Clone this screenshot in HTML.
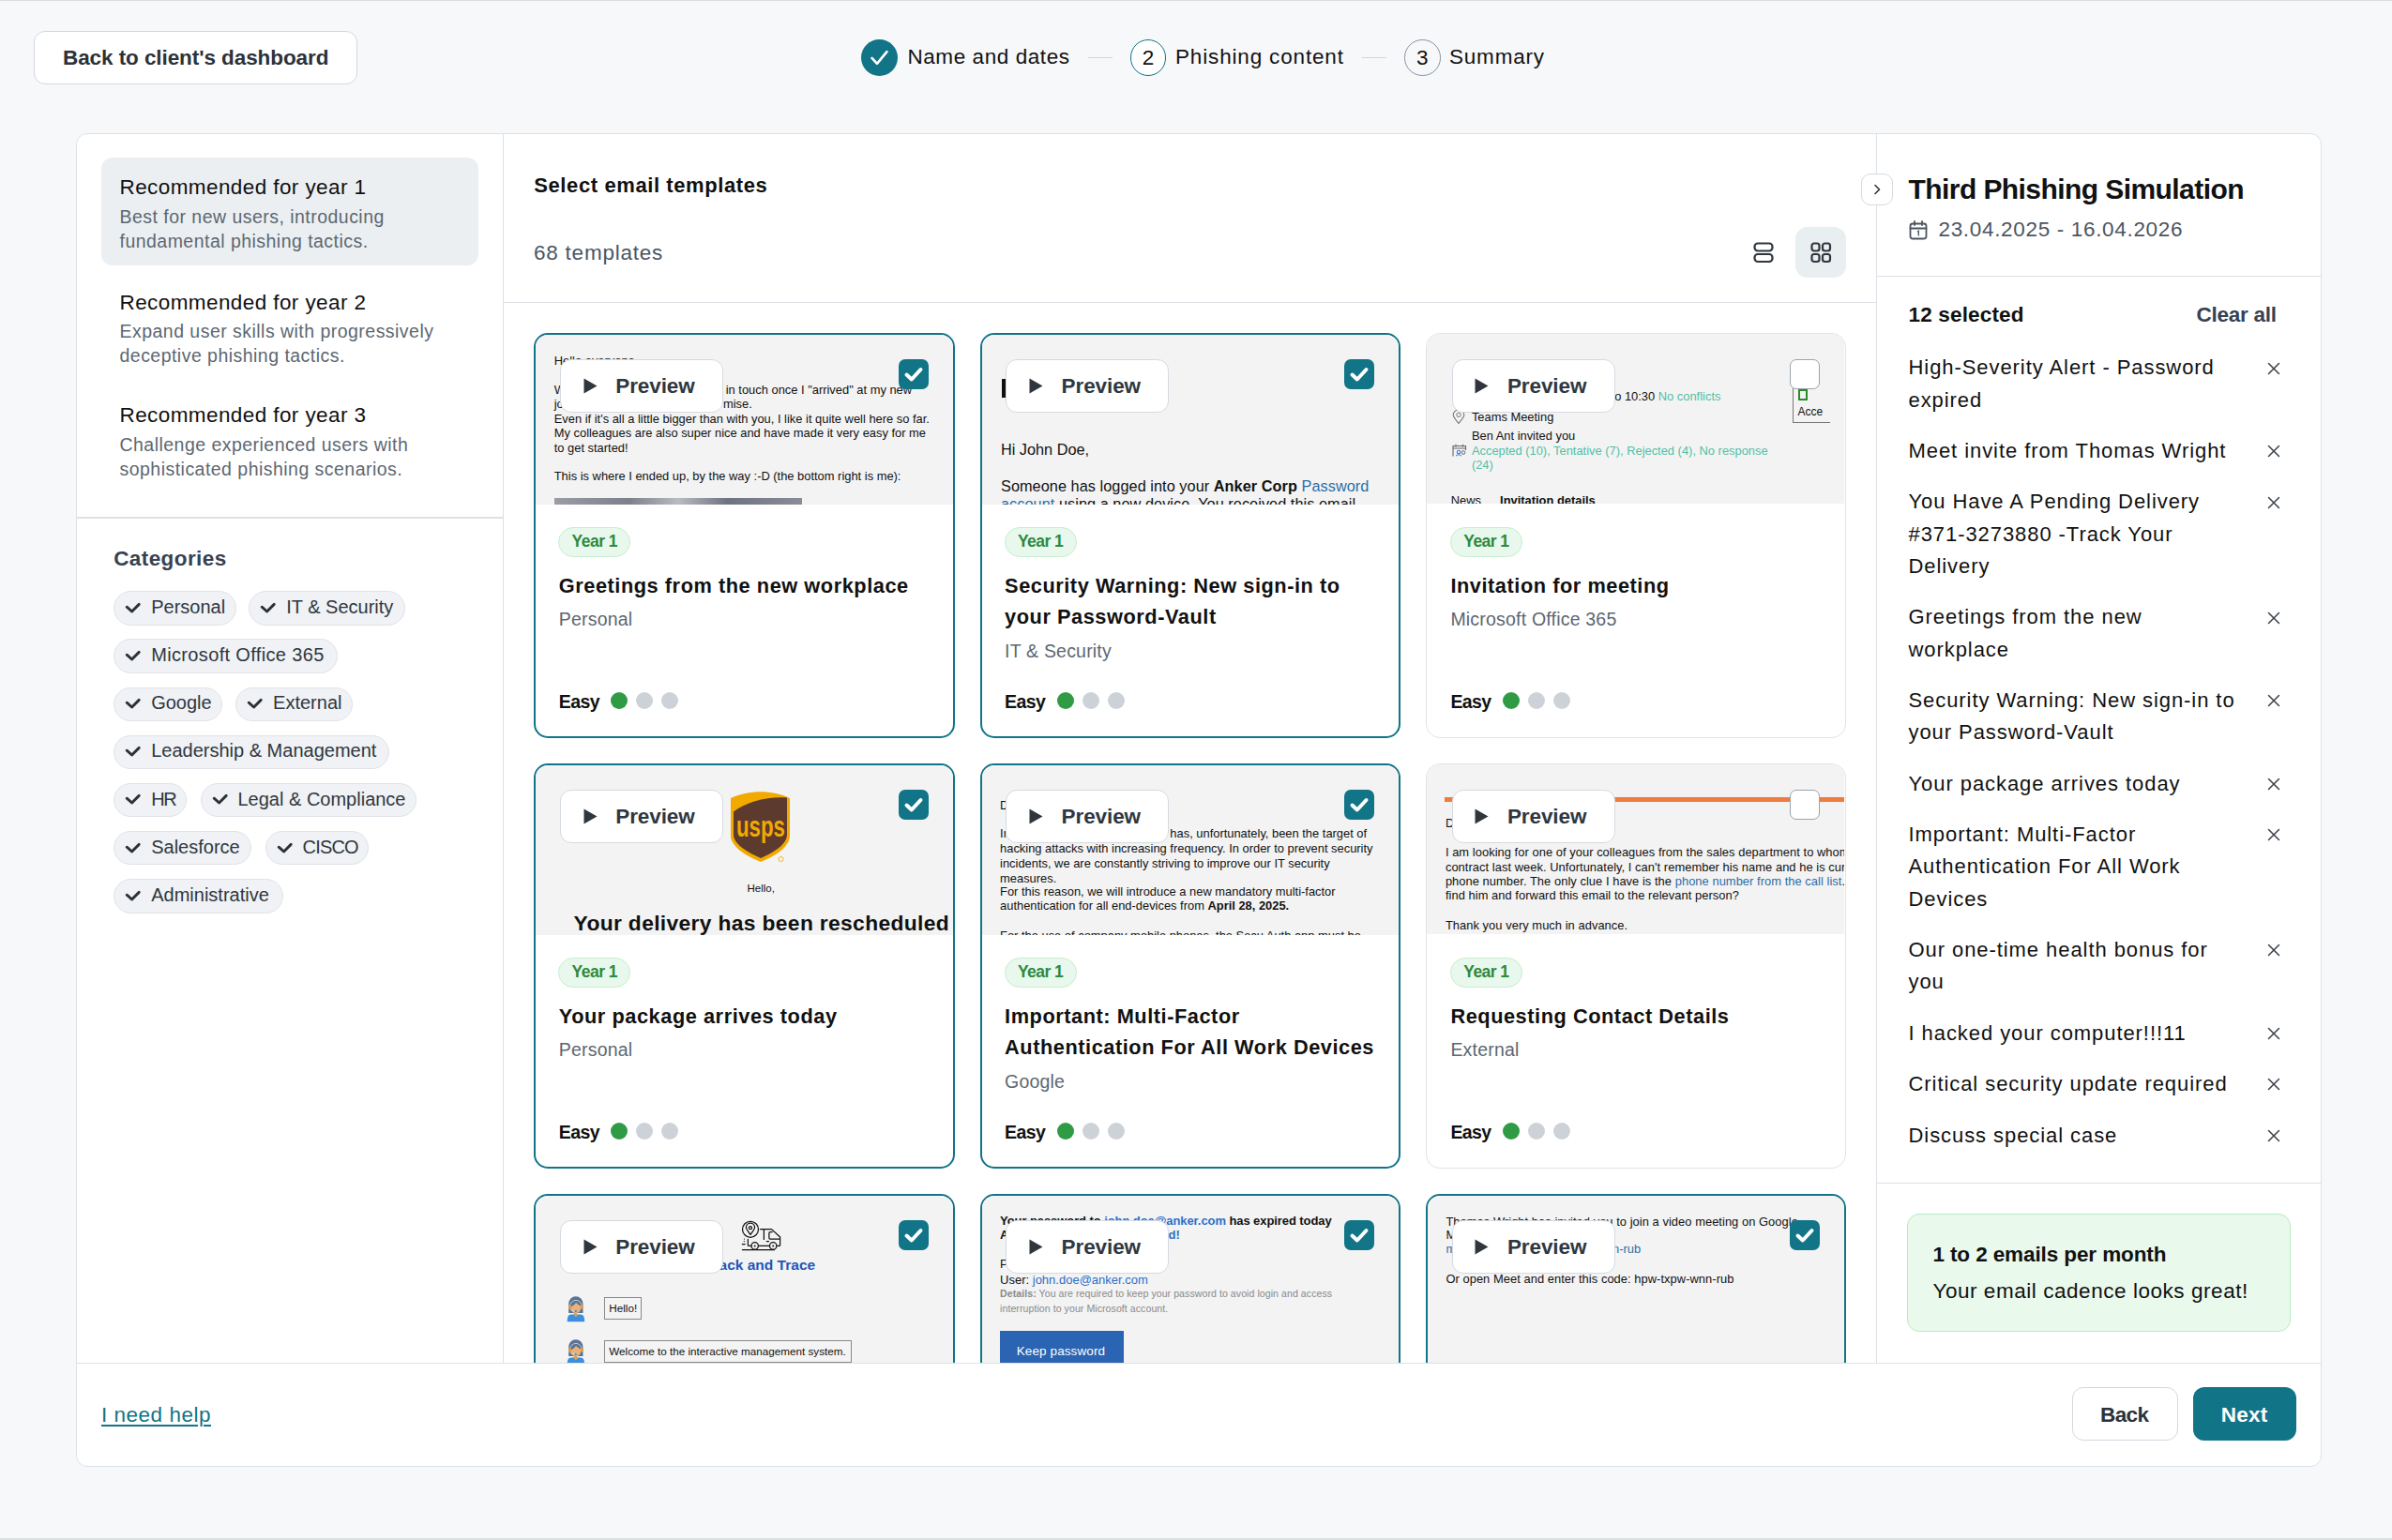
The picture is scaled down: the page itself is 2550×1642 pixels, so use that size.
<!DOCTYPE html>
<html><head><meta charset="utf-8"><title>Phishing content</title>
<style>
*{box-sizing:border-box;margin:0;padding:0}
html,body{width:2550px;height:1642px;overflow:hidden}
body{background:#f7f8fa;font-family:"Liberation Sans",sans-serif;position:relative;color:#111}
.a{position:absolute}
.t{position:absolute;white-space:nowrap}
.clip{position:absolute;overflow:hidden}
</style></head>
<body>
<div class="a" style="left:0.00px;top:0.00px;width:2550.00px;height:1.00px;background:#d9dde2"></div>
<div class="a" style="left:0.00px;top:1640.00px;width:2550.00px;height:2.00px;background:#dcdfe3"></div>
<div class="a" style="left:36.00px;top:33.00px;width:345.00px;height:57.00px;background:#fff;border:1.5px solid #d3d8de;border-radius:12px"></div>
<div class="t" style="left:67.00px;top:48.14px;font-size:22.5px;line-height:28.12px;font-weight:700;color:#2b3239;letter-spacing:-0.08px;">Back to client's dashboard</div>
<div class="a" style="left:918.00px;top:42.00px;width:39.00px;height:39.00px;background:#117487;border-radius:50%"></div>
<svg class="a" style="left:927px;top:51px" width="21" height="21" viewBox="0 0 21 21"><path d="M2.52 10.92 L7.98 16.80 L18.48 4.20" fill="none" stroke="#fff" stroke-width="2.6" stroke-linecap="round" stroke-linejoin="round"/></svg>
<div class="t" style="left:967.40px;top:47.14px;font-size:22.5px;line-height:28.12px;color:#111;letter-spacing:0.58px;">Name and dates</div>
<div class="a" style="left:1160.00px;top:60.75px;width:26.00px;height:1.50px;background:#cfd5db"></div>
<div class="a" style="left:1204.80px;top:42.00px;width:38.50px;height:38.50px;background:#fff;border:1.5px solid #117487;border-radius:50%"></div>
<div class="t" style="left:1204.80px;top:47.64px;font-size:22.5px;line-height:28.12px;color:#111;width:38.5px;text-align:center">2</div>
<div class="t" style="left:1253.00px;top:47.14px;font-size:22.5px;line-height:28.12px;color:#111;letter-spacing:0.84px;">Phishing content</div>
<div class="a" style="left:1452.00px;top:60.75px;width:26.00px;height:1.50px;background:#cfd5db"></div>
<div class="a" style="left:1497.00px;top:42.00px;width:38.50px;height:38.50px;border:1.5px solid #8a939c;border-radius:50%"></div>
<div class="t" style="left:1497.00px;top:47.64px;font-size:22.5px;line-height:28.12px;color:#111;width:38.5px;text-align:center">3</div>
<div class="t" style="left:1545.00px;top:47.14px;font-size:22.5px;line-height:28.12px;color:#111;letter-spacing:0.79px;">Summary</div>
<div class="a" style="left:81.00px;top:142.00px;width:2394.00px;height:1422.00px;background:#fff;border:1.5px solid #dde1e6;border-radius:12px"></div>
<div class="a" style="left:535.50px;top:142.50px;width:1.50px;height:1311.00px;background:#dde1e6"></div>
<div class="a" style="left:1999.75px;top:142.50px;width:1.50px;height:1311.00px;background:#dde1e6"></div>
<div class="a" style="left:82.00px;top:1452.75px;width:2392.00px;height:1.50px;background:#dde1e6"></div>
<div class="a" style="left:108.00px;top:168.00px;width:402.00px;height:114.50px;background:#ebeff2;border-radius:12px"></div>
<div class="t" style="left:127.50px;top:186.39px;font-size:22.5px;line-height:28.12px;color:#111;letter-spacing:0.41px;">Recommended for year 1</div>
<div class="t" style="left:127.50px;top:217.62px;font-size:19.5px;line-height:26.25px;color:#5d6771;letter-spacing:0.47px;">Best for new users, introducing<br>fundamental phishing tactics.</div>
<div class="t" style="left:127.50px;top:308.89px;font-size:22.5px;line-height:28.12px;color:#111;letter-spacing:0.41px;">Recommended for year 2</div>
<div class="t" style="left:127.50px;top:340.12px;font-size:19.5px;line-height:26.25px;color:#5d6771;letter-spacing:0.47px;">Expand user skills with progressively<br>deceptive phishing tactics.</div>
<div class="t" style="left:127.50px;top:429.39px;font-size:22.5px;line-height:28.12px;color:#111;letter-spacing:0.41px;">Recommended for year 3</div>
<div class="t" style="left:127.50px;top:460.62px;font-size:19.5px;line-height:26.25px;color:#5d6771;letter-spacing:0.47px;">Challenge experienced users with<br>sophisticated phishing scenarios.</div>
<div class="a" style="left:82.00px;top:551.25px;width:454.00px;height:1.50px;background:#dde1e6"></div>
<div class="t" style="left:121.20px;top:582.34px;font-size:22.5px;line-height:28.12px;font-weight:700;color:#374151;letter-spacing:0.41px;">Categories</div>
<div class="a" style="left:121.20px;top:630.20px;width:130.50px;height:36.40px;background:#f0f2f5;border:1.5px solid #dfe3e8;border-radius:19px"></div>
<svg class="a" style="left:133.2px;top:639.7px" width="18" height="18" viewBox="0 0 18 18"><path d="M2.2 7.2 L7.6 12 L15.2 4.4" fill="none" stroke="#2b3239" stroke-width="2.9" stroke-linecap="round" stroke-linejoin="round"/></svg>
<div class="t" style="left:161.20px;top:634.97px;font-size:20px;line-height:25.0px;color:#2f3740;">Personal</div>
<div class="a" style="left:265.20px;top:630.20px;width:166.40px;height:36.40px;background:#f0f2f5;border:1.5px solid #dfe3e8;border-radius:19px"></div>
<svg class="a" style="left:277.2px;top:639.7px" width="18" height="18" viewBox="0 0 18 18"><path d="M2.2 7.2 L7.6 12 L15.2 4.4" fill="none" stroke="#2b3239" stroke-width="2.9" stroke-linecap="round" stroke-linejoin="round"/></svg>
<div class="t" style="left:305.20px;top:634.97px;font-size:20px;line-height:25.0px;color:#2f3740;">IT &amp; Security</div>
<div class="a" style="left:121.20px;top:681.37px;width:239.00px;height:36.40px;background:#f0f2f5;border:1.5px solid #dfe3e8;border-radius:19px"></div>
<svg class="a" style="left:133.2px;top:690.87px" width="18" height="18" viewBox="0 0 18 18"><path d="M2.2 7.2 L7.6 12 L15.2 4.4" fill="none" stroke="#2b3239" stroke-width="2.9" stroke-linecap="round" stroke-linejoin="round"/></svg>
<div class="t" style="left:161.20px;top:686.14px;font-size:20px;line-height:25.0px;color:#2f3740;letter-spacing:0.35px;">Microsoft Office 365</div>
<div class="a" style="left:121.20px;top:732.54px;width:116.20px;height:36.40px;background:#f0f2f5;border:1.5px solid #dfe3e8;border-radius:19px"></div>
<svg class="a" style="left:133.2px;top:742.0400000000001px" width="18" height="18" viewBox="0 0 18 18"><path d="M2.2 7.2 L7.6 12 L15.2 4.4" fill="none" stroke="#2b3239" stroke-width="2.9" stroke-linecap="round" stroke-linejoin="round"/></svg>
<div class="t" style="left:161.20px;top:737.31px;font-size:20px;line-height:25.0px;color:#2f3740;">Google</div>
<div class="a" style="left:251.10px;top:732.54px;width:125.20px;height:36.40px;background:#f0f2f5;border:1.5px solid #dfe3e8;border-radius:19px"></div>
<svg class="a" style="left:263.1px;top:742.0400000000001px" width="18" height="18" viewBox="0 0 18 18"><path d="M2.2 7.2 L7.6 12 L15.2 4.4" fill="none" stroke="#2b3239" stroke-width="2.9" stroke-linecap="round" stroke-linejoin="round"/></svg>
<div class="t" style="left:291.10px;top:737.31px;font-size:20px;line-height:25.0px;color:#2f3740;">External</div>
<div class="a" style="left:121.20px;top:783.71px;width:294.20px;height:36.40px;background:#f0f2f5;border:1.5px solid #dfe3e8;border-radius:19px"></div>
<svg class="a" style="left:133.2px;top:793.21px" width="18" height="18" viewBox="0 0 18 18"><path d="M2.2 7.2 L7.6 12 L15.2 4.4" fill="none" stroke="#2b3239" stroke-width="2.9" stroke-linecap="round" stroke-linejoin="round"/></svg>
<div class="t" style="left:161.20px;top:788.48px;font-size:20px;line-height:25.0px;color:#2f3740;">Leadership &amp; Management</div>
<div class="a" style="left:121.20px;top:834.88px;width:78.30px;height:36.40px;background:#f0f2f5;border:1.5px solid #dfe3e8;border-radius:19px"></div>
<svg class="a" style="left:133.2px;top:844.3800000000001px" width="18" height="18" viewBox="0 0 18 18"><path d="M2.2 7.2 L7.6 12 L15.2 4.4" fill="none" stroke="#2b3239" stroke-width="2.9" stroke-linecap="round" stroke-linejoin="round"/></svg>
<div class="t" style="left:161.20px;top:839.65px;font-size:20px;line-height:25.0px;color:#2f3740;letter-spacing:-1.5px;">HR</div>
<div class="a" style="left:213.50px;top:834.88px;width:230.00px;height:36.40px;background:#f0f2f5;border:1.5px solid #dfe3e8;border-radius:19px"></div>
<svg class="a" style="left:225.5px;top:844.3800000000001px" width="18" height="18" viewBox="0 0 18 18"><path d="M2.2 7.2 L7.6 12 L15.2 4.4" fill="none" stroke="#2b3239" stroke-width="2.9" stroke-linecap="round" stroke-linejoin="round"/></svg>
<div class="t" style="left:253.50px;top:839.65px;font-size:20px;line-height:25.0px;color:#2f3740;">Legal &amp; Compliance</div>
<div class="a" style="left:121.20px;top:886.05px;width:147.30px;height:36.40px;background:#f0f2f5;border:1.5px solid #dfe3e8;border-radius:19px"></div>
<svg class="a" style="left:133.2px;top:895.5500000000001px" width="18" height="18" viewBox="0 0 18 18"><path d="M2.2 7.2 L7.6 12 L15.2 4.4" fill="none" stroke="#2b3239" stroke-width="2.9" stroke-linecap="round" stroke-linejoin="round"/></svg>
<div class="t" style="left:161.20px;top:890.82px;font-size:20px;line-height:25.0px;color:#2f3740;">Salesforce</div>
<div class="a" style="left:282.50px;top:886.05px;width:110.80px;height:36.40px;background:#f0f2f5;border:1.5px solid #dfe3e8;border-radius:19px"></div>
<svg class="a" style="left:294.5px;top:895.5500000000001px" width="18" height="18" viewBox="0 0 18 18"><path d="M2.2 7.2 L7.6 12 L15.2 4.4" fill="none" stroke="#2b3239" stroke-width="2.9" stroke-linecap="round" stroke-linejoin="round"/></svg>
<div class="t" style="left:322.50px;top:890.82px;font-size:20px;line-height:25.0px;color:#2f3740;letter-spacing:-0.8px;">CISCO</div>
<div class="a" style="left:121.20px;top:937.22px;width:181.30px;height:36.40px;background:#f0f2f5;border:1.5px solid #dfe3e8;border-radius:19px"></div>
<svg class="a" style="left:133.2px;top:946.72px" width="18" height="18" viewBox="0 0 18 18"><path d="M2.2 7.2 L7.6 12 L15.2 4.4" fill="none" stroke="#2b3239" stroke-width="2.9" stroke-linecap="round" stroke-linejoin="round"/></svg>
<div class="t" style="left:161.20px;top:941.99px;font-size:20px;line-height:25.0px;color:#2f3740;">Administrative</div>
<div class="t" style="left:569.25px;top:183.63px;font-size:22px;line-height:27.5px;font-weight:700;color:#111;letter-spacing:0.6px;">Select email templates</div>
<div class="t" style="left:569.00px;top:255.64px;font-size:22.5px;line-height:28.12px;color:#4b5563;letter-spacing:0.77px;">68 templates</div>
<svg class="a" style="left:1866px;top:255px" width="28" height="28" viewBox="0 0 28 28"><rect x="4.5" y="4.5" width="19" height="8" rx="3.5" fill="none" stroke="#2f363d" stroke-width="2.2"/><rect x="4.5" y="16" width="19" height="8" rx="3.5" fill="none" stroke="#2f363d" stroke-width="2.2"/></svg>
<div class="a" style="left:1914.00px;top:242.00px;width:54.00px;height:54.00px;background:#e9eef1;border-radius:13px"></div>
<svg class="a" style="left:1927px;top:255px" width="28" height="28" viewBox="0 0 28 28"><rect x="4.5" y="4.5" width="8" height="8" rx="2.5" fill="none" stroke="#2f363d" stroke-width="2.2"/><rect x="16" y="4.5" width="8" height="8" rx="2.5" fill="none" stroke="#2f363d" stroke-width="2.2"/><rect x="4.5" y="16" width="8" height="8" rx="2.5" fill="none" stroke="#2f363d" stroke-width="2.2"/><rect x="16" y="16" width="8" height="8" rx="2.5" fill="none" stroke="#2f363d" stroke-width="2.2"/></svg>
<div class="a" style="left:537.00px;top:321.50px;width:1463.00px;height:1.50px;background:#dde1e6"></div>
<div class="clip" style="left:537px;top:323px;width:1463px;height:1129.75px"><div class="a" style="left:-537px;top:-323px;width:2550px;height:1642px">
<div class="a" style="left:569.25px;top:355.3px;width:448.3px;height:432px;background:#fff;border:2px solid #117487;border-radius:15px;overflow:hidden">
<div class="clip" style="left:0;top:0;width:444.3px;height:180.7px;background:#f3f3f3">
<div class="t" style="left:19.50px;top:19.38px;font-size:12.9px;line-height:15.3px;color:#111;">Hello everyone,</div>
<div class="t" style="left:19.50px;top:50.58px;font-size:12.9px;line-height:15.3px;color:#111;">We</div>
<div class="t" style="left:202.50px;top:50.58px;font-size:12.9px;line-height:15.3px;color:#111;">in touch once I "arrived" at my new</div>
<div class="t" style="left:19.50px;top:65.58px;font-size:12.9px;line-height:15.3px;color:#111;">job</div>
<div class="t" style="left:199.75px;top:65.58px;font-size:12.9px;line-height:15.3px;color:#111;">mise.</div>
<div class="t" style="left:19.50px;top:81.78px;font-size:12.9px;line-height:15.3px;color:#111;">Even if it's all a little bigger than with you, I like it quite well here so far.</div>
<div class="t" style="left:19.50px;top:96.78px;font-size:12.9px;line-height:15.3px;color:#111;">My colleagues are also super nice and have made it very easy for me</div>
<div class="t" style="left:19.50px;top:112.28px;font-size:12.9px;line-height:15.3px;color:#111;">to get started!</div>
<div class="t" style="left:19.50px;top:142.28px;font-size:12.9px;line-height:15.3px;color:#111;">This is where I ended up, by the way :-D (the bottom right is me):</div>
<div class="a" style="left:19.50px;top:173.50px;width:264.00px;height:8.00px;background:linear-gradient(90deg,#9a9ca6,#7d7f8a 30%,#b9bbc2 50%,#6f7380 70%,#8a8d98)"></div>
</div>
</div>
<div class="a" style="left:597.00px;top:383.00px;width:174.00px;height:57.00px;background:#fff;border:1.5px solid #d5dae0;border-radius:12px"></div>
<svg class="a" style="left:621.75px;top:403.1px" width="15" height="17" viewBox="0 0 15 17"><path d="M0.5 0.5 L14.5 8.5 L0.5 16.5Z" fill="#2f363d"/></svg>
<div class="t" style="left:656.25px;top:398.14px;font-size:22.5px;line-height:28.12px;font-weight:700;color:#2f3740;letter-spacing:-0.09px;">Preview</div>
<div class="a" style="left:957.50px;top:382.50px;width:32.00px;height:32.00px;background:#117487;border-radius:7px"></div>
<svg class="a" style="left:957.5px;top:382.5px" width="32" height="32" viewBox="0 0 32 32"><path d="M8.5 16.5 L13.8 21.5 L23.5 11" fill="none" stroke="#fff" stroke-width="4" stroke-linecap="round" stroke-linejoin="round"/></svg>
<div class="a" style="left:595.25px;top:562.00px;width:77.00px;height:31.50px;background:#e8f8ec;border:1.5px solid #c8eecf;border-radius:16px"></div>
<div class="t" style="left:595.25px;top:567.40px;font-size:17.5px;line-height:21.88px;font-weight:700;color:#2d8a3e;letter-spacing:-0.55px;width:77px;text-align:center">Year 1</div>
<div class="t" style="left:595.75px;top:607.71px;font-size:21.75px;line-height:33.5px;font-weight:700;color:#111;letter-spacing:0.55px;">Greetings from the new workplace</div>
<div class="t" style="left:595.75px;top:648.05px;font-size:19.5px;line-height:24.38px;color:#5d6771;letter-spacing:0.2px;">Personal</div>
<div class="t" style="left:595.75px;top:736.35px;font-size:19.5px;line-height:24.38px;font-weight:700;color:#111;letter-spacing:-0.6px;">Easy</div>
<div class="a" style="left:651.45px;top:738.30px;width:18.00px;height:18.00px;background:#2f9b45;border-radius:50%"></div>
<div class="a" style="left:678.45px;top:738.30px;width:18.00px;height:18.00px;background:#cdd2d8;border-radius:50%"></div>
<div class="a" style="left:705.45px;top:738.30px;width:18.00px;height:18.00px;background:#cdd2d8;border-radius:50%"></div>
<div class="a" style="left:1044.58px;top:355.3px;width:448.3px;height:432px;background:#fff;border:2px solid #117487;border-radius:15px;overflow:hidden">
<div class="clip" style="left:0;top:0;width:444.3px;height:180.7px;background:#f3f3f3">
<div class="a" style="left:21.80px;top:46.50px;width:3.40px;height:20.20px;background:#111"></div>
<div class="t" style="left:20.40px;top:113.15px;font-size:16.3px;line-height:19px;color:#111;">Hi John Doe,</div>
<div class="t" style="left:20.40px;top:152.15px;font-size:16.3px;line-height:19px;color:#111;letter-spacing:0.05px;">Someone has logged into your <b>Anker Corp</b> <span style="color:#2c6ea6">Password</span></div>
<div class="t" style="left:20.40px;top:171.15px;font-size:16.3px;line-height:19px;color:#111;letter-spacing:0.05px;"><span style="color:#2c6ea6">account</span> using a new device. You received this email</div>
</div>
</div>
<div class="a" style="left:1072.33px;top:383.00px;width:174.00px;height:57.00px;background:#fff;border:1.5px solid #d5dae0;border-radius:12px"></div>
<svg class="a" style="left:1097.08px;top:403.1px" width="15" height="17" viewBox="0 0 15 17"><path d="M0.5 0.5 L14.5 8.5 L0.5 16.5Z" fill="#2f363d"/></svg>
<div class="t" style="left:1131.58px;top:398.14px;font-size:22.5px;line-height:28.12px;font-weight:700;color:#2f3740;letter-spacing:-0.09px;">Preview</div>
<div class="a" style="left:1432.83px;top:382.50px;width:32.00px;height:32.00px;background:#117487;border-radius:7px"></div>
<svg class="a" style="left:1432.83px;top:382.5px" width="32" height="32" viewBox="0 0 32 32"><path d="M8.5 16.5 L13.8 21.5 L23.5 11" fill="none" stroke="#fff" stroke-width="4" stroke-linecap="round" stroke-linejoin="round"/></svg>
<div class="a" style="left:1070.58px;top:562.00px;width:77.00px;height:31.50px;background:#e8f8ec;border:1.5px solid #c8eecf;border-radius:16px"></div>
<div class="t" style="left:1070.58px;top:567.40px;font-size:17.5px;line-height:21.88px;font-weight:700;color:#2d8a3e;letter-spacing:-0.55px;width:77px;text-align:center">Year 1</div>
<div class="t" style="left:1071.08px;top:607.71px;font-size:21.75px;line-height:33.5px;font-weight:700;color:#111;letter-spacing:0.55px;">Security Warning: New sign-in to<br>your Password-Vault</div>
<div class="t" style="left:1071.08px;top:681.55px;font-size:19.5px;line-height:24.38px;color:#5d6771;letter-spacing:0.2px;">IT &amp; Security</div>
<div class="t" style="left:1071.08px;top:736.35px;font-size:19.5px;line-height:24.38px;font-weight:700;color:#111;letter-spacing:-0.6px;">Easy</div>
<div class="a" style="left:1126.78px;top:738.30px;width:18.00px;height:18.00px;background:#2f9b45;border-radius:50%"></div>
<div class="a" style="left:1153.78px;top:738.30px;width:18.00px;height:18.00px;background:#cdd2d8;border-radius:50%"></div>
<div class="a" style="left:1180.78px;top:738.30px;width:18.00px;height:18.00px;background:#cdd2d8;border-radius:50%"></div>
<div class="a" style="left:1519.9px;top:355.3px;width:448.3px;height:432px;background:#fff;border:1.5px solid #dfe3e8;border-radius:15px;overflow:hidden">
<div class="clip" style="left:0;top:0;width:445.3px;height:181.2px;background:#f3f3f3">
<div class="t" style="left:48.00px;top:58.98px;font-size:12.9px;line-height:15.3px;color:#111;">Monday</div>
<div class="t" style="left:200.30px;top:58.98px;font-size:12.9px;line-height:15.3px;color:#111;">o 10:30 <span style="color:#52bfa5">No conflicts</span></div>
<div class="t" style="left:48.00px;top:81.08px;font-size:12.9px;line-height:15.3px;color:#111;">Teams Meeting</div>
<div class="t" style="left:48.00px;top:100.68px;font-size:12.9px;line-height:15.3px;color:#111;">Ben Ant invited you</div>
<div class="t" style="left:48.00px;top:116.63px;font-size:12.9px;line-height:15.4px;color:#111;"><span style="color:#52bfa5">Accepted (10), Tentative (7), Rejected (4), No response<br>(24)</span></div>
<svg class="a" style="left:27.0px;top:81.0px" width="14" height="15" viewBox="0 0 14 15"><path d="M7 14.5 C3.5 10 1.2 7.5 1.2 5.5 A5.8 5.5 0 0 1 12.8 5.5 C12.8 7.5 10.5 10 7 14.5Z" fill="none" stroke="#777" stroke-width="1.1"/><circle cx="7" cy="5.3" r="2.2" fill="none" stroke="#777" stroke-width="1"/></svg>
<svg class="a" style="left:27.0px;top:117.0px" width="16" height="14" viewBox="0 0 16 14"><path d="M1 13.5 V2.5 H14.5 V7 M1 5 H14.5 M4 0.8 V3.5 M11.5 0.8 V3.5" fill="none" stroke="#666" stroke-width="1.1"/><circle cx="7" cy="9" r="1.7" fill="none" stroke="#3a7bd5" stroke-width="1.1"/><path d="M4.3 13.2 C5 11.3 9 11.3 9.7 13.2" fill="none" stroke="#3a7bd5" stroke-width="1.1"/><circle cx="12" cy="9.5" r="1.8" fill="none" stroke="#666" stroke-width="1"/></svg>
<div class="t" style="left:25.90px;top:169.58px;font-size:12.9px;line-height:15.3px;color:#111;">News</div>
<div class="t" style="left:78.20px;top:169.58px;font-size:12.9px;line-height:15.3px;font-weight:700;color:#111;">Invitation details</div>
<div class="a" style="left:390.10px;top:57.60px;width:40.00px;height:37.10px;border-left:1.5px solid #777;border-bottom:1.5px solid #777"></div>
<div class="a" style="left:395.90px;top:58.60px;width:10.20px;height:12.00px;border:2px solid #2a8a2a"></div>
<div class="t" style="left:395.50px;top:75.59px;font-size:12px;line-height:15.3px;color:#111;">Acce</div>
</div>
</div>
<div class="a" style="left:1547.65px;top:383.00px;width:174.00px;height:57.00px;background:#fff;border:1.5px solid #d5dae0;border-radius:12px"></div>
<svg class="a" style="left:1572.4px;top:403.1px" width="15" height="17" viewBox="0 0 15 17"><path d="M0.5 0.5 L14.5 8.5 L0.5 16.5Z" fill="#2f363d"/></svg>
<div class="t" style="left:1606.90px;top:398.14px;font-size:22.5px;line-height:28.12px;font-weight:700;color:#2f3740;letter-spacing:-0.09px;">Preview</div>
<div class="a" style="left:1908.15px;top:382.50px;width:32.00px;height:32.00px;background:#fff;border:1.5px solid #9aa3ab;border-radius:7px"></div>
<div class="a" style="left:1545.90px;top:562.00px;width:77.00px;height:31.50px;background:#e8f8ec;border:1.5px solid #c8eecf;border-radius:16px"></div>
<div class="t" style="left:1545.90px;top:567.40px;font-size:17.5px;line-height:21.88px;font-weight:700;color:#2d8a3e;letter-spacing:-0.55px;width:77px;text-align:center">Year 1</div>
<div class="t" style="left:1546.40px;top:607.71px;font-size:21.75px;line-height:33.5px;font-weight:700;color:#111;letter-spacing:0.55px;">Invitation for meeting</div>
<div class="t" style="left:1546.40px;top:648.05px;font-size:19.5px;line-height:24.38px;color:#5d6771;letter-spacing:0.2px;">Microsoft Office 365</div>
<div class="t" style="left:1546.40px;top:736.35px;font-size:19.5px;line-height:24.38px;font-weight:700;color:#111;letter-spacing:-0.6px;">Easy</div>
<div class="a" style="left:1602.10px;top:738.30px;width:18.00px;height:18.00px;background:#2f9b45;border-radius:50%"></div>
<div class="a" style="left:1629.10px;top:738.30px;width:18.00px;height:18.00px;background:#cdd2d8;border-radius:50%"></div>
<div class="a" style="left:1656.10px;top:738.30px;width:18.00px;height:18.00px;background:#cdd2d8;border-radius:50%"></div>
<div class="a" style="left:569.25px;top:814.3px;width:448.3px;height:432px;background:#fff;border:2px solid #117487;border-radius:15px;overflow:hidden">
<div class="clip" style="left:0;top:0;width:444.3px;height:180.7px;background:#f3f3f3">
<svg class="a" style="left:207px;top:26.7px" width="66" height="78" viewBox="0 0 66 78"><path d="M1 8 C20 -1 46 -1 64 8 V48 C64 60 48 70 33 76 C18 70 1 60 1 48 Z" fill="#f2a900"/><path d="M4 22.5 C18 12 40 6 61 7.5 V47 C61 57 47 66 33 72 C19 66 4 57 4 47 Z" fill="#5c3a2e"/><text x="7" y="49" font-family="Liberation Sans" font-weight="700" font-size="32" fill="#f2a900" textLength="52" lengthAdjust="spacingAndGlyphs">usps</text><circle cx="54.5" cy="73" r="2.6" fill="none" stroke="#f2a900" stroke-width="0.8"/></svg>
<div class="t" style="left:220.00px;top:123.97px;font-size:11.5px;line-height:15.3px;color:#111;width:40px;text-align:center">Hello,</div>
<div class="t" style="left:40.30px;top:155.20px;font-size:22.8px;line-height:26px;font-weight:700;color:#111;letter-spacing:0.35px;">Your delivery has been rescheduled</div>
</div>
</div>
<div class="a" style="left:597.00px;top:842.00px;width:174.00px;height:57.00px;background:#fff;border:1.5px solid #d5dae0;border-radius:12px"></div>
<svg class="a" style="left:621.75px;top:862.0999999999999px" width="15" height="17" viewBox="0 0 15 17"><path d="M0.5 0.5 L14.5 8.5 L0.5 16.5Z" fill="#2f363d"/></svg>
<div class="t" style="left:656.25px;top:857.14px;font-size:22.5px;line-height:28.12px;font-weight:700;color:#2f3740;letter-spacing:-0.09px;">Preview</div>
<div class="a" style="left:957.50px;top:841.50px;width:32.00px;height:32.00px;background:#117487;border-radius:7px"></div>
<svg class="a" style="left:957.5px;top:841.5px" width="32" height="32" viewBox="0 0 32 32"><path d="M8.5 16.5 L13.8 21.5 L23.5 11" fill="none" stroke="#fff" stroke-width="4" stroke-linecap="round" stroke-linejoin="round"/></svg>
<div class="a" style="left:595.25px;top:1021.00px;width:77.00px;height:31.50px;background:#e8f8ec;border:1.5px solid #c8eecf;border-radius:16px"></div>
<div class="t" style="left:595.25px;top:1026.40px;font-size:17.5px;line-height:21.88px;font-weight:700;color:#2d8a3e;letter-spacing:-0.55px;width:77px;text-align:center">Year 1</div>
<div class="t" style="left:595.75px;top:1066.71px;font-size:21.75px;line-height:33.5px;font-weight:700;color:#111;letter-spacing:0.55px;">Your package arrives today</div>
<div class="t" style="left:595.75px;top:1107.05px;font-size:19.5px;line-height:24.38px;color:#5d6771;letter-spacing:0.2px;">Personal</div>
<div class="t" style="left:595.75px;top:1195.35px;font-size:19.5px;line-height:24.38px;font-weight:700;color:#111;letter-spacing:-0.6px;">Easy</div>
<div class="a" style="left:651.45px;top:1197.30px;width:18.00px;height:18.00px;background:#2f9b45;border-radius:50%"></div>
<div class="a" style="left:678.45px;top:1197.30px;width:18.00px;height:18.00px;background:#cdd2d8;border-radius:50%"></div>
<div class="a" style="left:705.45px;top:1197.30px;width:18.00px;height:18.00px;background:#cdd2d8;border-radius:50%"></div>
<div class="a" style="left:1044.58px;top:814.3px;width:448.3px;height:432px;background:#fff;border:2px solid #117487;border-radius:15px;overflow:hidden">
<div class="clip" style="left:0;top:0;width:444.3px;height:180.7px;background:#f3f3f3">
<div class="t" style="left:19.50px;top:34.33px;font-size:12.9px;line-height:15.6px;color:#111;">Dear colleagues,</div>
<div class="t" style="left:19.50px;top:65.13px;font-size:12.9px;line-height:15.6px;color:#111;">In recent months, our company has, unfortunately, been the target of</div>
<div class="t" style="left:19.50px;top:80.43px;font-size:12.9px;line-height:15.6px;color:#111;">hacking attacks with increasing frequency. In order to prevent security</div>
<div class="t" style="left:19.50px;top:96.23px;font-size:12.9px;line-height:15.6px;color:#111;">incidents, we are constantly striving to improve our IT security</div>
<div class="t" style="left:19.50px;top:112.23px;font-size:12.9px;line-height:15.6px;color:#111;">measures.</div>
<div class="t" style="left:19.50px;top:127.03px;font-size:12.9px;line-height:15.6px;color:#111;">For this reason, we will introduce a new mandatory multi-factor</div>
<div class="t" style="left:19.50px;top:142.03px;font-size:12.9px;line-height:15.6px;color:#111;">authentication for all end-devices from <b>April 28, 2025.</b></div>
<div class="t" style="left:19.50px;top:173.73px;font-size:12.9px;line-height:15.6px;color:#111;">For the use of company mobile phones, the Secu Auth app must be</div>
</div>
</div>
<div class="a" style="left:1072.33px;top:842.00px;width:174.00px;height:57.00px;background:#fff;border:1.5px solid #d5dae0;border-radius:12px"></div>
<svg class="a" style="left:1097.08px;top:862.0999999999999px" width="15" height="17" viewBox="0 0 15 17"><path d="M0.5 0.5 L14.5 8.5 L0.5 16.5Z" fill="#2f363d"/></svg>
<div class="t" style="left:1131.58px;top:857.14px;font-size:22.5px;line-height:28.12px;font-weight:700;color:#2f3740;letter-spacing:-0.09px;">Preview</div>
<div class="a" style="left:1432.83px;top:841.50px;width:32.00px;height:32.00px;background:#117487;border-radius:7px"></div>
<svg class="a" style="left:1432.83px;top:841.5px" width="32" height="32" viewBox="0 0 32 32"><path d="M8.5 16.5 L13.8 21.5 L23.5 11" fill="none" stroke="#fff" stroke-width="4" stroke-linecap="round" stroke-linejoin="round"/></svg>
<div class="a" style="left:1070.58px;top:1021.00px;width:77.00px;height:31.50px;background:#e8f8ec;border:1.5px solid #c8eecf;border-radius:16px"></div>
<div class="t" style="left:1070.58px;top:1026.40px;font-size:17.5px;line-height:21.88px;font-weight:700;color:#2d8a3e;letter-spacing:-0.55px;width:77px;text-align:center">Year 1</div>
<div class="t" style="left:1071.08px;top:1066.71px;font-size:21.75px;line-height:33.5px;font-weight:700;color:#111;letter-spacing:0.55px;">Important: Multi-Factor<br>Authentication For All Work Devices</div>
<div class="t" style="left:1071.08px;top:1140.55px;font-size:19.5px;line-height:24.38px;color:#5d6771;letter-spacing:0.2px;">Google</div>
<div class="t" style="left:1071.08px;top:1195.35px;font-size:19.5px;line-height:24.38px;font-weight:700;color:#111;letter-spacing:-0.6px;">Easy</div>
<div class="a" style="left:1126.78px;top:1197.30px;width:18.00px;height:18.00px;background:#2f9b45;border-radius:50%"></div>
<div class="a" style="left:1153.78px;top:1197.30px;width:18.00px;height:18.00px;background:#cdd2d8;border-radius:50%"></div>
<div class="a" style="left:1180.78px;top:1197.30px;width:18.00px;height:18.00px;background:#cdd2d8;border-radius:50%"></div>
<div class="a" style="left:1519.9px;top:814.3px;width:448.3px;height:432px;background:#fff;border:1.5px solid #dfe3e8;border-radius:15px;overflow:hidden">
<div class="clip" style="left:0;top:0;width:445.3px;height:181.2px;background:#f3f3f3">
<div class="a" style="left:19.50px;top:35.00px;width:427.00px;height:4.30px;background:#f07b3f"></div>
<div class="t" style="left:20.00px;top:54.98px;font-size:12.9px;line-height:15.3px;color:#111;">Dear Sir or Madam,</div>
<div class="t" style="left:20.00px;top:86.08px;font-size:12.9px;line-height:15.3px;color:#111;letter-spacing:0.05px;">I am looking for one of your colleagues from the sales department to whom I sent a</div>
<div class="t" style="left:20.00px;top:101.68px;font-size:12.9px;line-height:15.3px;color:#111;letter-spacing:0.05px;">contract last week. Unfortunately, I can't remember his name and he is currently</div>
<div class="t" style="left:20.00px;top:116.58px;font-size:12.9px;line-height:15.3px;color:#111;letter-spacing:0.05px;">phone number. The only clue I have is the <span style="color:#2c6ea6">phone number from the call list</span>. Could you</div>
<div class="t" style="left:20.00px;top:131.78px;font-size:12.9px;line-height:15.3px;color:#111;letter-spacing:0.05px;">find him and forward this email to the relevant person?</div>
<div class="t" style="left:20.00px;top:163.68px;font-size:12.9px;line-height:15.3px;color:#111;letter-spacing:0.05px;">Thank you very much in advance.</div>
</div>
</div>
<div class="a" style="left:1547.65px;top:842.00px;width:174.00px;height:57.00px;background:#fff;border:1.5px solid #d5dae0;border-radius:12px"></div>
<svg class="a" style="left:1572.4px;top:862.0999999999999px" width="15" height="17" viewBox="0 0 15 17"><path d="M0.5 0.5 L14.5 8.5 L0.5 16.5Z" fill="#2f363d"/></svg>
<div class="t" style="left:1606.90px;top:857.14px;font-size:22.5px;line-height:28.12px;font-weight:700;color:#2f3740;letter-spacing:-0.09px;">Preview</div>
<div class="a" style="left:1908.15px;top:841.50px;width:32.00px;height:32.00px;background:#fff;border:1.5px solid #9aa3ab;border-radius:7px"></div>
<div class="a" style="left:1545.90px;top:1021.00px;width:77.00px;height:31.50px;background:#e8f8ec;border:1.5px solid #c8eecf;border-radius:16px"></div>
<div class="t" style="left:1545.90px;top:1026.40px;font-size:17.5px;line-height:21.88px;font-weight:700;color:#2d8a3e;letter-spacing:-0.55px;width:77px;text-align:center">Year 1</div>
<div class="t" style="left:1546.40px;top:1066.71px;font-size:21.75px;line-height:33.5px;font-weight:700;color:#111;letter-spacing:0.55px;">Requesting Contact Details</div>
<div class="t" style="left:1546.40px;top:1107.05px;font-size:19.5px;line-height:24.38px;color:#5d6771;letter-spacing:0.2px;">External</div>
<div class="t" style="left:1546.40px;top:1195.35px;font-size:19.5px;line-height:24.38px;font-weight:700;color:#111;letter-spacing:-0.6px;">Easy</div>
<div class="a" style="left:1602.10px;top:1197.30px;width:18.00px;height:18.00px;background:#2f9b45;border-radius:50%"></div>
<div class="a" style="left:1629.10px;top:1197.30px;width:18.00px;height:18.00px;background:#cdd2d8;border-radius:50%"></div>
<div class="a" style="left:1656.10px;top:1197.30px;width:18.00px;height:18.00px;background:#cdd2d8;border-radius:50%"></div>
<div class="a" style="left:569.25px;top:1273.3px;width:448.3px;height:432px;background:#fff;border:2px solid #117487;border-radius:15px;overflow:hidden">
<div class="clip" style="left:0;top:0;width:444.3px;height:180.7px;background:#f3f3f3">
<svg class="a" style="left:217.75px;top:23.25px" width="45" height="36" viewBox="0 0 45 36"><g fill="none" stroke="#111" stroke-width="1.25" stroke-linecap="round" stroke-linejoin="round"><circle cx="11" cy="11.75" r="8.5"/><path d="M11 17.4 C8.2 13.6 6.4 11.2 6.4 9.7 A4.6 4.6 0 0 1 15.6 9.7 C15.6 11.2 13.8 13.6 11 17.4 Z"/><circle cx="11" cy="10.2" r="1.5"/><path d="M21.5 11.6 H33.5 L42.6 20 V28.5 Q42.6 29.4 41.7 29.4 H39.2"/><path d="M25.4 11.6 V22.4"/><path d="M34.2 14.6 H32 Q30.9 14.6 30.9 15.7 V20.9 Q30.9 22 32 22 H42.4"/><path d="M8.4 22.4 V28.4 Q8.4 29.4 9.4 29.4 H11.8"/><path d="M19.6 29.4 H31.3"/><circle cx="15.7" cy="29.4" r="3.7"/><circle cx="35.2" cy="29.4" r="3.7"/><path d="M2.4 33.6 H36.5"/><path d="M2.3 27.5 H5.2 M4.5 22 V22.1 M4.3 24.6 V24.7 M28.3 24.6 H30.5"/><circle cx="15.7" cy="29.4" r="0.4"/><circle cx="35.2" cy="29.4" r="0.4"/></g></svg>
<div class="t" style="left:180.70px;top:64.23px;font-size:15.5px;line-height:18px;font-weight:700;color:#1f56b8;">Track and Trace</div>
<svg class="a" style="left:32.5px;top:106.5px" width="20" height="28" viewBox="0 0 20 28"><path d="M2.2 18.1 V8 A7.65 7.65 0 0 1 17.5 8 V18.1 Z" fill="#5b7393"/><ellipse cx="9.9" cy="12.6" rx="5.4" ry="5.6" fill="#eab27a"/><path d="M4.4 11.5 C5 6.5 8 5.2 10.5 5.4 C13.5 5.6 15.2 8 15.4 10.5 C13 9.8 11 8.2 10 6.8 C9 8.8 7 10.5 4.4 11.5Z" fill="#5b7393"/><path d="M3.6 10.5 A6.4 7 0 0 1 16.3 10.5" fill="none" stroke="#c9d2dc" stroke-width="0.9"/><rect x="2.2" y="9.6" width="2.6" height="4.2" rx="1.2" fill="#f29b30"/><rect x="15" y="9.6" width="2.6" height="4.2" rx="1.2" fill="#f29b30"/><path d="M3.6 13.6 C5 15.6 7 16 9 15.9" fill="none" stroke="#dfe6ee" stroke-width="0.8"/><ellipse cx="9.7" cy="15.9" rx="1.2" ry="0.9" fill="#2f86d6"/><rect x="7.7" y="17.4" width="3.6" height="3" fill="#e2a56c"/><path d="M0.7 27.2 C0.8 22 1.5 19.6 5 19.4 H14.8 C18.3 19.6 19 22 19.2 27.2 Z" fill="#3b8fde"/><path d="M7.2 19.4 L9.9 22.2 L12.7 19.4Z" fill="#f0a040"/></svg>
<div class="a" style="left:72.80px;top:107.50px;width:40.30px;height:24.20px;border:1.3px solid #888;background:#f4f4f4"></div>
<div class="t" style="left:78.00px;top:112.45px;font-size:11.7px;line-height:14px;color:#111;">Hello!</div>
<svg class="a" style="left:32.5px;top:152.3px" width="20" height="28" viewBox="0 0 20 28"><path d="M2.2 18.1 V8 A7.65 7.65 0 0 1 17.5 8 V18.1 Z" fill="#5b7393"/><ellipse cx="9.9" cy="12.6" rx="5.4" ry="5.6" fill="#eab27a"/><path d="M4.4 11.5 C5 6.5 8 5.2 10.5 5.4 C13.5 5.6 15.2 8 15.4 10.5 C13 9.8 11 8.2 10 6.8 C9 8.8 7 10.5 4.4 11.5Z" fill="#5b7393"/><path d="M3.6 10.5 A6.4 7 0 0 1 16.3 10.5" fill="none" stroke="#c9d2dc" stroke-width="0.9"/><rect x="2.2" y="9.6" width="2.6" height="4.2" rx="1.2" fill="#f29b30"/><rect x="15" y="9.6" width="2.6" height="4.2" rx="1.2" fill="#f29b30"/><path d="M3.6 13.6 C5 15.6 7 16 9 15.9" fill="none" stroke="#dfe6ee" stroke-width="0.8"/><ellipse cx="9.7" cy="15.9" rx="1.2" ry="0.9" fill="#2f86d6"/><rect x="7.7" y="17.4" width="3.6" height="3" fill="#e2a56c"/><path d="M0.7 27.2 C0.8 22 1.5 19.6 5 19.4 H14.8 C18.3 19.6 19 22 19.2 27.2 Z" fill="#3b8fde"/><path d="M7.2 19.4 L9.9 22.2 L12.7 19.4Z" fill="#f0a040"/></svg>
<div class="a" style="left:72.80px;top:153.30px;width:263.70px;height:24.20px;border:1.3px solid #888;background:#f4f4f4"></div>
<div class="t" style="left:78.00px;top:158.25px;font-size:11.7px;line-height:14px;color:#111;">Welcome to the interactive management system.</div>
</div>
</div>
<div class="a" style="left:597.00px;top:1301.00px;width:174.00px;height:57.00px;background:#fff;border:1.5px solid #d5dae0;border-radius:12px"></div>
<svg class="a" style="left:621.75px;top:1321.1px" width="15" height="17" viewBox="0 0 15 17"><path d="M0.5 0.5 L14.5 8.5 L0.5 16.5Z" fill="#2f363d"/></svg>
<div class="t" style="left:656.25px;top:1316.14px;font-size:22.5px;line-height:28.12px;font-weight:700;color:#2f3740;letter-spacing:-0.09px;">Preview</div>
<div class="a" style="left:957.50px;top:1300.50px;width:32.00px;height:32.00px;background:#117487;border-radius:7px"></div>
<svg class="a" style="left:957.5px;top:1300.5px" width="32" height="32" viewBox="0 0 32 32"><path d="M8.5 16.5 L13.8 21.5 L23.5 11" fill="none" stroke="#fff" stroke-width="4" stroke-linecap="round" stroke-linejoin="round"/></svg>
<div class="a" style="left:1044.58px;top:1273.3px;width:448.3px;height:432px;background:#fff;border:2px solid #117487;border-radius:15px;overflow:hidden">
<div class="clip" style="left:0;top:0;width:444.3px;height:180.7px;background:#f3f3f3">
<div class="t" style="left:19.50px;top:18.75px;font-size:13px;line-height:15.3px;font-weight:700;color:#111;letter-spacing:-0.08px;">Your password to <span style="color:#2b6fc9">john.doe@anker.com</span> has expired today</div>
<div class="t" style="left:19.50px;top:33.75px;font-size:13px;line-height:15.3px;font-weight:700;color:#111;">A</div>
<div class="t" style="left:199.00px;top:33.75px;font-size:13px;line-height:15.3px;font-weight:700;color:#2b6fc9;">d!</div>
<div class="t" style="left:19.50px;top:64.85px;font-size:13px;line-height:15.3px;color:#111;">Password expired</div>
<div class="t" style="left:19.50px;top:81.25px;font-size:13px;line-height:15.3px;color:#111;">User: <span style="color:#2b6fc9">john.doe@anker.com</span></div>
<div class="t" style="left:19.50px;top:97.08px;font-size:10.6px;line-height:15.3px;color:#8a8a8a;letter-spacing:0.05px;"><b>Details:</b> You are required to keep your password to avoid login and access</div>
<div class="t" style="left:19.50px;top:112.78px;font-size:10.6px;line-height:15.3px;color:#8a8a8a;letter-spacing:0.05px;">interruption to your Microsoft account.</div>
<div class="a" style="left:19.50px;top:143.40px;width:132.00px;height:60.00px;background:#2a64b3"></div>
<div class="t" style="left:37.20px;top:157.37px;font-size:13.5px;line-height:15.3px;color:#fff;letter-spacing:0.1px;">Keep password</div>
</div>
</div>
<div class="a" style="left:1072.33px;top:1301.00px;width:174.00px;height:57.00px;background:#fff;border:1.5px solid #d5dae0;border-radius:12px"></div>
<svg class="a" style="left:1097.08px;top:1321.1px" width="15" height="17" viewBox="0 0 15 17"><path d="M0.5 0.5 L14.5 8.5 L0.5 16.5Z" fill="#2f363d"/></svg>
<div class="t" style="left:1131.58px;top:1316.14px;font-size:22.5px;line-height:28.12px;font-weight:700;color:#2f3740;letter-spacing:-0.09px;">Preview</div>
<div class="a" style="left:1432.83px;top:1300.50px;width:32.00px;height:32.00px;background:#117487;border-radius:7px"></div>
<svg class="a" style="left:1432.83px;top:1300.5px" width="32" height="32" viewBox="0 0 32 32"><path d="M8.5 16.5 L13.8 21.5 L23.5 11" fill="none" stroke="#fff" stroke-width="4" stroke-linecap="round" stroke-linejoin="round"/></svg>
<div class="a" style="left:1519.9px;top:1273.3px;width:448.3px;height:432px;background:#fff;border:2px solid #117487;border-radius:15px;overflow:hidden">
<div class="clip" style="left:0;top:0;width:444.3px;height:180.7px;background:#f3f3f3">
<div class="t" style="left:19.50px;top:19.28px;font-size:12.9px;line-height:15.3px;color:#111;letter-spacing:0.05px;">Thomas Wright has invited you to join a video meeting on Google</div>
<div class="t" style="left:19.50px;top:33.78px;font-size:12.9px;line-height:15.3px;color:#111;">Meet:</div>
<div class="t" style="left:19.50px;top:48.78px;font-size:12.9px;line-height:15.3px;color:#111;"><span style="color:#2c6ea6">meet.google.com/hpw-txpw-wnn-rub</span></div>
<div class="t" style="left:19.50px;top:81.08px;font-size:12.9px;line-height:15.3px;color:#111;letter-spacing:0.05px;">Or open Meet and enter this code: hpw-txpw-wnn-rub</div>
</div>
</div>
<div class="a" style="left:1547.65px;top:1301.00px;width:174.00px;height:57.00px;background:#fff;border:1.5px solid #d5dae0;border-radius:12px"></div>
<svg class="a" style="left:1572.4px;top:1321.1px" width="15" height="17" viewBox="0 0 15 17"><path d="M0.5 0.5 L14.5 8.5 L0.5 16.5Z" fill="#2f363d"/></svg>
<div class="t" style="left:1606.90px;top:1316.14px;font-size:22.5px;line-height:28.12px;font-weight:700;color:#2f3740;letter-spacing:-0.09px;">Preview</div>
<div class="a" style="left:1908.15px;top:1300.50px;width:32.00px;height:32.00px;background:#117487;border-radius:7px"></div>
<svg class="a" style="left:1908.15px;top:1300.5px" width="32" height="32" viewBox="0 0 32 32"><path d="M8.5 16.5 L13.8 21.5 L23.5 11" fill="none" stroke="#fff" stroke-width="4" stroke-linecap="round" stroke-linejoin="round"/></svg>
</div></div>
<div class="a" style="left:1984.00px;top:184.50px;width:34.00px;height:34.00px;background:#fff;border:1.5px solid #d5dae0;border-radius:10px"></div>
<svg class="a" style="left:1993px;top:193.5px" width="16" height="16" viewBox="0 0 16 16"><path d="M6 3.5 L10.5 8 L6 12.5" fill="none" stroke="#2f363d" stroke-width="1.6" stroke-linecap="round" stroke-linejoin="round"/></svg>
<div class="t" style="left:2034.50px;top:183.35px;font-size:30px;line-height:37.5px;font-weight:700;color:#111;letter-spacing:-0.57px;">Third Phishing Simulation</div>
<svg class="a" style="left:2034px;top:234px" width="22" height="23" viewBox="0 0 22 23"><rect x="2.5" y="4.5" width="17" height="16" rx="2.5" fill="none" stroke="#4b5563" stroke-width="1.8"/><path d="M2.5 9.5 H19.5 M7 2 V6 M15 2 V6" stroke="#4b5563" stroke-width="1.8" fill="none" stroke-linecap="round"/><path d="M10 13.2 L11.3 12.3 V17.5" stroke="#4b5563" stroke-width="1.3" fill="none"/></svg>
<div class="t" style="left:2066.50px;top:231.14px;font-size:22.5px;line-height:28.12px;color:#4b5563;letter-spacing:0.67px;">23.04.2025 - 16.04.2026</div>
<div class="a" style="left:2001.00px;top:293.75px;width:473.00px;height:1.50px;background:#dde1e6"></div>
<div class="t" style="left:2034.50px;top:322.14px;font-size:22.5px;line-height:28.12px;font-weight:700;color:#111;letter-spacing:0.17px;">12 selected</div>
<div class="t" style="left:2341.50px;top:322.14px;font-size:22.5px;line-height:28.12px;font-weight:700;color:#374151;letter-spacing:-0.26px;">Clear all</div>
<div class="t" style="left:2034.50px;top:375.20px;font-size:22px;line-height:34.35px;color:#111;letter-spacing:0.93px;">High-Severity Alert - Password<br>expired</div>
<svg class="a" style="left:2417px;top:385.50px" width="14" height="14" viewBox="0 0 14 14"><path d="M1.5 1.5 L12.5 12.5 M12.5 1.5 L1.5 12.5" stroke="#3a4149" stroke-width="1.5" stroke-linecap="round"/></svg>
<div class="t" style="left:2034.50px;top:463.90px;font-size:22px;line-height:34.35px;color:#111;letter-spacing:0.93px;">Meet invite from Thomas Wright</div>
<svg class="a" style="left:2417px;top:474.20px" width="14" height="14" viewBox="0 0 14 14"><path d="M1.5 1.5 L12.5 12.5 M12.5 1.5 L1.5 12.5" stroke="#3a4149" stroke-width="1.5" stroke-linecap="round"/></svg>
<div class="t" style="left:2034.50px;top:518.25px;font-size:22px;line-height:34.35px;color:#111;letter-spacing:0.93px;">You Have A Pending Delivery<br>#371-3273880 -Track Your<br>Delivery</div>
<svg class="a" style="left:2417px;top:528.55px" width="14" height="14" viewBox="0 0 14 14"><path d="M1.5 1.5 L12.5 12.5 M12.5 1.5 L1.5 12.5" stroke="#3a4149" stroke-width="1.5" stroke-linecap="round"/></svg>
<div class="t" style="left:2034.50px;top:641.30px;font-size:22px;line-height:34.35px;color:#111;letter-spacing:0.93px;">Greetings from the new<br>workplace</div>
<svg class="a" style="left:2417px;top:651.60px" width="14" height="14" viewBox="0 0 14 14"><path d="M1.5 1.5 L12.5 12.5 M12.5 1.5 L1.5 12.5" stroke="#3a4149" stroke-width="1.5" stroke-linecap="round"/></svg>
<div class="t" style="left:2034.50px;top:730.00px;font-size:22px;line-height:34.35px;color:#111;letter-spacing:0.93px;">Security Warning: New sign-in to<br>your Password-Vault</div>
<svg class="a" style="left:2417px;top:740.30px" width="14" height="14" viewBox="0 0 14 14"><path d="M1.5 1.5 L12.5 12.5 M12.5 1.5 L1.5 12.5" stroke="#3a4149" stroke-width="1.5" stroke-linecap="round"/></svg>
<div class="t" style="left:2034.50px;top:818.70px;font-size:22px;line-height:34.35px;color:#111;letter-spacing:0.93px;">Your package arrives today</div>
<svg class="a" style="left:2417px;top:829.00px" width="14" height="14" viewBox="0 0 14 14"><path d="M1.5 1.5 L12.5 12.5 M12.5 1.5 L1.5 12.5" stroke="#3a4149" stroke-width="1.5" stroke-linecap="round"/></svg>
<div class="t" style="left:2034.50px;top:873.05px;font-size:22px;line-height:34.35px;color:#111;letter-spacing:0.93px;">Important: Multi-Factor<br>Authentication For All Work<br>Devices</div>
<svg class="a" style="left:2417px;top:883.35px" width="14" height="14" viewBox="0 0 14 14"><path d="M1.5 1.5 L12.5 12.5 M12.5 1.5 L1.5 12.5" stroke="#3a4149" stroke-width="1.5" stroke-linecap="round"/></svg>
<div class="t" style="left:2034.50px;top:996.10px;font-size:22px;line-height:34.35px;color:#111;letter-spacing:0.93px;">Our one-time health bonus for<br>you</div>
<svg class="a" style="left:2417px;top:1006.40px" width="14" height="14" viewBox="0 0 14 14"><path d="M1.5 1.5 L12.5 12.5 M12.5 1.5 L1.5 12.5" stroke="#3a4149" stroke-width="1.5" stroke-linecap="round"/></svg>
<div class="t" style="left:2034.50px;top:1084.80px;font-size:22px;line-height:34.35px;color:#111;letter-spacing:0.93px;">I hacked your computer!!!11</div>
<svg class="a" style="left:2417px;top:1095.10px" width="14" height="14" viewBox="0 0 14 14"><path d="M1.5 1.5 L12.5 12.5 M12.5 1.5 L1.5 12.5" stroke="#3a4149" stroke-width="1.5" stroke-linecap="round"/></svg>
<div class="t" style="left:2034.50px;top:1139.15px;font-size:22px;line-height:34.35px;color:#111;letter-spacing:0.93px;">Critical security update required</div>
<svg class="a" style="left:2417px;top:1149.45px" width="14" height="14" viewBox="0 0 14 14"><path d="M1.5 1.5 L12.5 12.5 M12.5 1.5 L1.5 12.5" stroke="#3a4149" stroke-width="1.5" stroke-linecap="round"/></svg>
<div class="t" style="left:2034.50px;top:1193.50px;font-size:22px;line-height:34.35px;color:#111;letter-spacing:0.93px;">Discuss special case</div>
<svg class="a" style="left:2417px;top:1203.80px" width="14" height="14" viewBox="0 0 14 14"><path d="M1.5 1.5 L12.5 12.5 M12.5 1.5 L1.5 12.5" stroke="#3a4149" stroke-width="1.5" stroke-linecap="round"/></svg>
<div class="a" style="left:2001.00px;top:1260.50px;width:473.00px;height:1.50px;background:#dde1e6"></div>
<div class="a" style="left:2033.30px;top:1294.30px;width:408.30px;height:126.00px;background:#e9f9ec;border:1.5px solid #b9ecc2;border-radius:13px"></div>
<div class="t" style="left:2060.40px;top:1323.84px;font-size:22.5px;line-height:28.12px;font-weight:700;color:#111;letter-spacing:-0.1px;">1 to 2 emails per month</div>
<div class="t" style="left:2060.40px;top:1362.54px;font-size:22.5px;line-height:28.12px;color:#111;letter-spacing:0.55px;">Your email cadence looks great!</div>
<div class="t" style="left:108.00px;top:1494.94px;font-size:22.5px;line-height:28.12px;color:#117487;letter-spacing:0.51px;text-decoration:underline;text-underline-offset:3px;text-decoration-thickness:2px">I need help</div>
<div class="a" style="left:2209.30px;top:1479.40px;width:112.30px;height:57.10px;background:#fff;border:1.5px solid #d3d8de;border-radius:12px"></div>
<div class="t" style="left:2239.00px;top:1494.54px;font-size:22.5px;line-height:28.12px;font-weight:700;color:#2b3239;letter-spacing:-0.6px;">Back</div>
<div class="a" style="left:2338.00px;top:1479.40px;width:109.60px;height:57.10px;background:#117487;border-radius:12px"></div>
<div class="t" style="left:2367.70px;top:1494.54px;font-size:22.5px;line-height:28.12px;font-weight:700;color:#fff;letter-spacing:0.3px;">Next</div>
</body></html>
